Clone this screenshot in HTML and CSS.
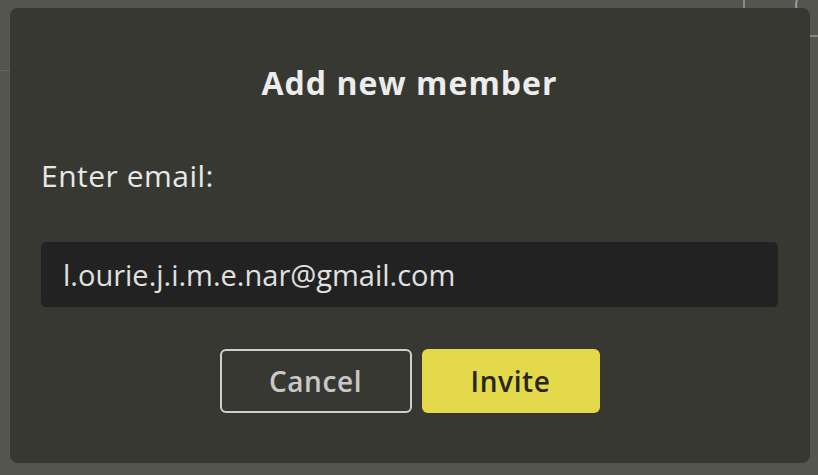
FILE: index.html
```html
<!DOCTYPE html>
<html lang="en">
<head>
<meta charset="utf-8">
<title>Add new member</title>
<link rel="stylesheet" href="styles.css">
</head>
<body>
<div class="backdrop">
  <span class="bg-line bg-line-v1"></span>
  <span class="bg-line bg-line-h1"></span>
  <span class="bg-line bg-line-h2"></span>
  <span class="bg-arc"></span>
  <div class="modal">
    <h1 class="modal-title">Add new member</h1>
    <label class="field-label" for="email">Enter email:</label>
    <div class="input-box" id="email">l.ourie.j.i.m.e.nar@gmail.com</div>
    <div class="actions">
      <button class="btn btn-cancel">Cancel</button>
      <button class="btn btn-invite">Invite</button>
    </div>
  </div>
</div>
</body>
</html>
```

FILE: styles.css
```css
* { box-sizing: border-box; }
html, body {
  margin: 0;
  padding: 0;
  width: 818px;
  height: 475px;
  overflow: hidden;
  background: #55554f;
  font-family: "Open Sans", "Noto Sans", sans-serif;
}
.backdrop {
  position: relative;
  width: 818px;
  height: 475px;
  padding: 8px 8px 12px 10px;
}
.bg-line {
  position: absolute;
  background: #8a8a84;
}
.bg-line-v1 { left: 743px; top: 0; width: 2px; height: 8px; }
.bg-line-h1 { left: 810px; top: 35px; width: 8px; height: 2px; background: #85857f; }
.bg-line-h2 { left: 0; top: 70px; width: 10px; height: 1px; background: #64645e; }
.bg-arc {
  position: absolute;
  left: 795px;
  top: -4px;
  width: 14px;
  height: 18px;
  border-left: 2px solid #9aa0a8;
  border-radius: 50%;
}
.modal {
  position: relative;
  width: 800px;
  height: 455px;
  background: #383833;
  border-radius: 8px;
  padding: 0 32px 0 31px;
  display: flex;
  flex-direction: column;
}
.modal-title {
  margin: 53px 0 0;
  text-align: center;
  color: #ececec;
  font-size: 32px;
  font-weight: 700;
  line-height: 44px;
  letter-spacing: 1px;
}
.field-label {
  margin-top: 51px;
  color: #e8e8e8;
  font-size: 30px;
  line-height: 40px;
  letter-spacing: 0.5px;
}
.input-box {
  margin-top: 46px;
  height: 65px;
  background: #222222;
  border-radius: 5px;
  padding: 0 22px;
  display: flex;
  align-items: center;
  color: #e0e0e0;
  font-size: 29px;
  letter-spacing: 0;
}
.actions {
  margin-top: 42px;
  display: flex;
  justify-content: center;
  gap: 10px;
}
.btn {
  height: 64px;
  border-radius: 6px;
  font-family: inherit;
  font-size: 28px;
  font-weight: 600;
  letter-spacing: 0.6px;
  padding: 0;
}
.btn-cancel {
  width: 192px;
  background: transparent;
  border: 2px solid #cfcfcf;
  color: #c8c8c8;
}
.btn-invite {
  width: 178px;
  background: #e4d84b;
  border: none;
  color: #26261f;
}
```
